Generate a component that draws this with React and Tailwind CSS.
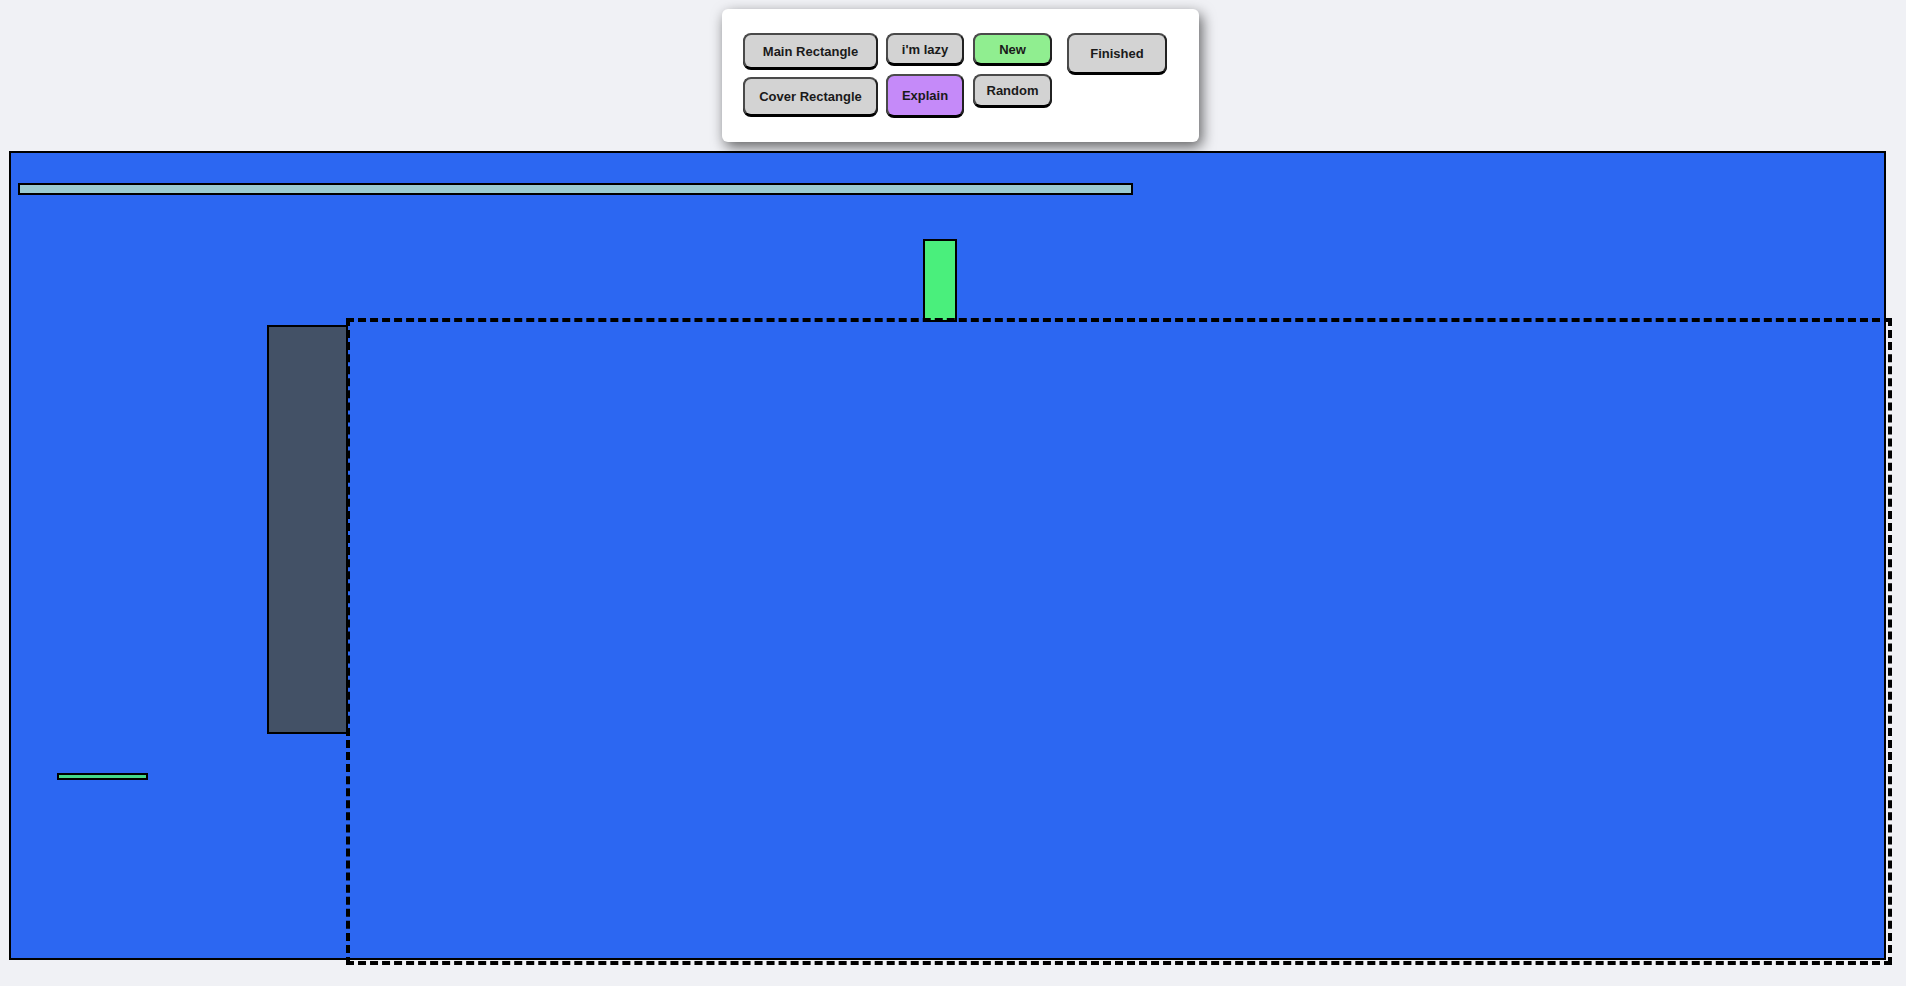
import React from 'react';

const btn =
    'flex items-center justify-center rounded-[8px] border-2 border-[#4a4a4a] border-b-black border-r-[#222] shadow-[0_1px_0_#000] text-[13px] font-bold text-[#1a1a1a] leading-none';

export default function App() {
    return (
        <div className="min-h-screen w-full bg-[#f0f1f5] pt-[9px] font-['Liberation_Sans',Arial,sans-serif]">
            {/* panneau de contrôle */}
            <div className="ml-[722px] w-[477px] h-[133px] rounded-[6px] bg-white shadow-[3px_5px_14px_rgba(0,0,0,0.6)] pl-[21px] pt-[24px] flex gap-[8px]">
                <div className="flex flex-col gap-[8px]">
                    <button className={`${btn} w-[135px] h-[36px] bg-[#d3d3d3]`}>Main Rectangle</button>
                    <button className={`${btn} w-[135px] h-[39px] bg-[#d3d3d3]`}>Cover Rectangle</button>
                </div>
                <div className="flex flex-col gap-[9px]">
                    <button className={`${btn} w-[78px] h-[32px] bg-[#d3d3d3]`}>i'm lazy</button>
                    <button className={`${btn} w-[78px] h-[43px] bg-[#c58af9]`}>Explain</button>
                </div>
                <div className="flex flex-col gap-[9px] ml-px">
                    <button className={`${btn} w-[79px] h-[32px] bg-[#90ee90]`}>New</button>
                    <button className={`${btn} w-[79px] h-[33px] bg-[#d3d3d3]`}>Random</button>
                </div>
                <div className="ml-[7px]">
                    <button className={`${btn} w-[100px] h-[41px] bg-[#d3d3d3]`}>Finished</button>
                </div>
            </div>

            {/* zone de jeu */}
            <div className="relative ml-[9px] mt-[9px] w-[1877px] h-[809px] border-2 border-black bg-[#2c67f2]">
                <div className="absolute left-[7px] top-[30px] w-[1115px] h-[12px] border-2 border-black bg-[#9acbd2]" />
                <div className="absolute left-[912px] top-[86px] w-[34px] h-[83px] border-2 border-black bg-[#4aef7c]" />
                <div className="absolute left-[256px] top-[172px] w-[81px] h-[409px] border-2 border-black bg-[#435166]" />
                <div className="absolute left-[46px] top-[620px] w-[91px] h-[7px] border-2 border-black bg-[#45d98a]" />
                <div className="absolute left-[335px] top-[165px] w-[1546px] h-[647px] border-4 border-dashed border-black" />
            </div>
        </div>
    );
}
